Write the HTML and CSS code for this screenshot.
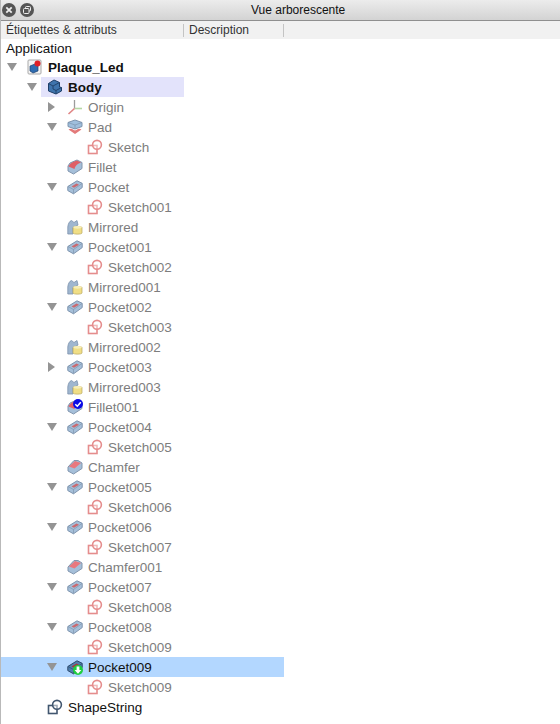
FILE: index.html
```html
<!DOCTYPE html>
<html lang="fr">
<head>
    <meta charset="UTF-8">
    <meta name="viewport" content="width=device-width, initial-scale=1.0">
    <title>Vue arborescente</title>
    <link rel="stylesheet" href="styles.css">
</head>
<body>
    <svg class="defs" width="0" height="0">
        <defs>
            <symbol id="i-sketch" viewBox="0 0 16 16">
                <rect x="1.5" y="6.5" width="8.5" height="8" fill="#fff" fill-opacity=".4" stroke="#e58d8d" stroke-width="1.6"/>
                <circle cx="10" cy="5.8" r="4.4" fill="#fff" fill-opacity=".4" stroke="#e58d8d" stroke-width="1.6"/>
            </symbol>
            <symbol id="i-string" viewBox="0 0 16 16">
                <rect x="1.5" y="6.5" width="8.5" height="8" fill="#fff" stroke="#41566f" stroke-width="1.6"/>
                <circle cx="10" cy="5.8" r="4.4" fill="#fff" fill-opacity=".5" stroke="#41566f" stroke-width="1.6"/>
            </symbol>
            <symbol id="i-part" viewBox="0 0 16 16">
                <rect x="1" y="1" width="13" height="14" rx="1" fill="#f4f4f4" stroke="#a8a8a8"/>
                <path d="M3 7l5-2 3 2v5l-5 2-3-2z" fill="#2f6cb0" stroke="#1d3f6d" stroke-width=".7"/>
                <circle cx="10.5" cy="4.5" r="3" fill="#e01f26"/>
            </symbol>
            <symbol id="i-body" viewBox="0 0 16 16">
                <path d="M1.5 4.500L7 1l5.500 2.500v4.500l2 .5v3.500L9 15 1.500 12z" fill="#3f74ad" stroke="#1f3f68"/>
                <path d="M1.500 4.500L6 7v3l3 1.500V15M6 7l6.500-3.500M9 11.500L14.500 8.500" fill="none" stroke="#1f3f68" stroke-width=".9"/>
            </symbol>
            <symbol id="i-pad" viewBox="0 0 16 16">
                <path d="M1 3.500L8 1l7 2.500v4L8 10 1 7.500z" fill="#9fbfdd" stroke="#7d93ad"/>
                <path d="M1 3.500L8 6l7-2.500M8 6v4" fill="none" stroke="#7d93ad" stroke-width=".7"/>
                <path d="M1.500 10.500C3 9.500 4 9.500 5 10l3 1.500 3-1.500c1-.5 2-.5 3.500.5L8 15z" fill="#e37a7a"/>
            </symbol>
            <symbol id="i-fillet" viewBox="0 0 16 16">
                <path d="M1 7l2-3 7-3 5 2.500v6L6.500 15 1 12z" fill="#a5bfd9" stroke="#8296ae"/>
                <path d="M1.500 7.500C2.500 4.500 6 2.500 10 1.500l4 2c-3 1-5.500 2.500-6.500 6.500z" fill="#e05f66"/>
            </symbol>
            <symbol id="i-chamfer" viewBox="0 0 16 16">
                <path d="M1 8l6-6.500h4l4 2.500v5.500L6.500 15 1 12z" fill="#a5bfd9" stroke="#8296ae"/>
                <path d="M2 7.500L8 2l6 2-6.500 5.500z" fill="#e9787e"/>
            </symbol>
            <symbol id="i-pocket" viewBox="0 0 16 16">
                <path d="M.8 7.500L10 1.800l5.200 2.500v4.300L6.500 14.800.8 11.600z" fill="#a5bfd9" stroke="#7d93ad" stroke-linejoin="round"/>
                <path d="M1 7.500l5.500 3L15 4.500M6.500 10.500v4" fill="none" stroke="#7d93ad" stroke-width=".7"/>
                <path d="M4.500 7.500l5-3 2.500 1.200-5 3z" fill="#c9696f"/>
            </symbol>
            <symbol id="i-pocket-on" viewBox="0 0 16 16">
                <path d="M.8 7.500L10 1.800l5.200 2.500v4.300L6.500 14.800.8 11.600z" fill="#4f7fae" stroke="#2d4a6d" stroke-linejoin="round"/>
                <path d="M1 7.500l5.500 3L15 4.500M6.500 10.500v4" fill="none" stroke="#2d4a6d" stroke-width=".7"/>
                <path d="M4.500 7.500l5-3 2.500 1.200-5 3z" fill="#a33a40"/>
            </symbol>
            <symbol id="i-mirror" viewBox="0 0 16 16">
                <path d="M.8 15V8C1 5 2.500 2 4.500 1.500L7 3.500l3-2 1 4.500-5 3v6z" fill="#9fb6cf" stroke="#7d93ad" stroke-width=".8"/>
                <path d="M6 8.500c0-1.500 9-1.500 9 0V14c0 1.500-9 1.500-9 0z" fill="#f0de85" stroke="#b8a860" stroke-width=".7"/>
                <ellipse cx="10.500" cy="8.300" rx="4.200" ry="1.400" fill="#f7eeb7"/>
            </symbol>
            <symbol id="i-origin" viewBox="0 0 16 16">
                <path d="M7.500 1v8.500" stroke="#9c9c9c" stroke-width="1.300"/>
                <path d="M7.500 9.500h7.500" stroke="#b5d8a5" stroke-width="1.600"/>
                <path d="M7.500 9.500L1.500 15" stroke="#e08484" stroke-width="1.600"/>
            </symbol>
            <symbol id="b-check" viewBox="0 0 10 10">
                <circle cx="5" cy="5" r="5" fill="#0a0ae6"/>
                <path d="M2.300 5.200l2 2 3.500-4" fill="none" stroke="#fff" stroke-width="1.500"/>
            </symbol>
            <symbol id="b-down" viewBox="0 0 10 10">
                <circle cx="5" cy="5" r="5" fill="#1fcf3f"/>
                <path d="M3.600 1.500h2.800v3.500h2L5 8.800 1.600 5h2z" fill="#fff"/>
            </symbol>
        </defs>
    </svg>

    <div class="titlebar">
        <div class="win-btns">
            <span class="win-btn">
                <svg width="14" height="14" viewBox="0 0 14 14"><path d="M4.300 4.300l5.400 5.400M9.700 4.300l-5.400 5.400" stroke="#eee" stroke-width="1.800"/></svg>
            </span>
            <span class="win-btn">
                <svg width="14" height="14" viewBox="0 0 14 14"><rect x="5.500" y="3.500" width="5" height="4.500" rx="1" fill="none" stroke="#eee"/><rect x="3.500" y="5.500" width="5.500" height="5" rx="1" fill="#555" stroke="#eee"/></svg>
            </span>
        </div>
        <div class="title">Vue arborescente</div>
    </div>

    <div class="columns">
        <div class="col col-label">Étiquettes &amp; attributs</div>
        <div class="col col-desc">Description</div>
    </div>

    <div class="tree">
        <div class="row root">Application</div>

        <div class="row lv0 strong"><i class="arrow open"></i><svg class="ico"><use href="#i-part"/></svg>Plaque_Led</div>
        <div class="row lv1 strong"><i class="arrow open"></i><span class="active-body"><svg class="ico"><use href="#i-body"/></svg>Body</span></div>

        <div class="row lv2 off"><i class="arrow closed"></i><svg class="ico"><use href="#i-origin"/></svg>Origin</div>
        <div class="row lv2 off"><i class="arrow open"></i><svg class="ico"><use href="#i-pad"/></svg>Pad</div>
        <div class="row lv3 off"><svg class="ico"><use href="#i-sketch"/></svg>Sketch</div>
        <div class="row lv2 off"><i class="arrow"></i><svg class="ico"><use href="#i-fillet"/></svg>Fillet</div>
        <div class="row lv2 off"><i class="arrow open"></i><svg class="ico"><use href="#i-pocket"/></svg>Pocket</div>
        <div class="row lv3 off"><svg class="ico"><use href="#i-sketch"/></svg>Sketch001</div>
        <div class="row lv2 off"><i class="arrow"></i><svg class="ico"><use href="#i-mirror"/></svg>Mirrored</div>
        <div class="row lv2 off"><i class="arrow open"></i><svg class="ico"><use href="#i-pocket"/></svg>Pocket001</div>
        <div class="row lv3 off"><svg class="ico"><use href="#i-sketch"/></svg>Sketch002</div>
        <div class="row lv2 off"><i class="arrow"></i><svg class="ico"><use href="#i-mirror"/></svg>Mirrored001</div>
        <div class="row lv2 off"><i class="arrow open"></i><svg class="ico"><use href="#i-pocket"/></svg>Pocket002</div>
        <div class="row lv3 off"><svg class="ico"><use href="#i-sketch"/></svg>Sketch003</div>
        <div class="row lv2 off"><i class="arrow"></i><svg class="ico"><use href="#i-mirror"/></svg>Mirrored002</div>
        <div class="row lv2 off"><i class="arrow closed"></i><svg class="ico"><use href="#i-pocket"/></svg>Pocket003</div>
        <div class="row lv2 off"><i class="arrow"></i><svg class="ico"><use href="#i-mirror"/></svg>Mirrored003</div>
        <div class="row lv2 off"><i class="arrow"></i><span class="ico-wrap"><svg class="ico"><use href="#i-fillet"/></svg><svg class="badge badge-check"><use href="#b-check"/></svg></span>Fillet001</div>
        <div class="row lv2 off"><i class="arrow open"></i><svg class="ico"><use href="#i-pocket"/></svg>Pocket004</div>
        <div class="row lv3 off"><svg class="ico"><use href="#i-sketch"/></svg>Sketch005</div>
        <div class="row lv2 off"><i class="arrow"></i><svg class="ico"><use href="#i-chamfer"/></svg>Chamfer</div>
        <div class="row lv2 off"><i class="arrow open"></i><svg class="ico"><use href="#i-pocket"/></svg>Pocket005</div>
        <div class="row lv3 off"><svg class="ico"><use href="#i-sketch"/></svg>Sketch006</div>
        <div class="row lv2 off"><i class="arrow open"></i><svg class="ico"><use href="#i-pocket"/></svg>Pocket006</div>
        <div class="row lv3 off"><svg class="ico"><use href="#i-sketch"/></svg>Sketch007</div>
        <div class="row lv2 off"><i class="arrow"></i><svg class="ico"><use href="#i-chamfer"/></svg>Chamfer001</div>
        <div class="row lv2 off"><i class="arrow open"></i><svg class="ico"><use href="#i-pocket"/></svg>Pocket007</div>
        <div class="row lv3 off"><svg class="ico"><use href="#i-sketch"/></svg>Sketch008</div>
        <div class="row lv2 off"><i class="arrow open"></i><svg class="ico"><use href="#i-pocket"/></svg>Pocket008</div>
        <div class="row lv3 off"><svg class="ico"><use href="#i-sketch"/></svg>Sketch009</div>
        <div class="row lv2 selected"><i class="arrow open"></i><span class="ico-wrap"><svg class="ico"><use href="#i-pocket-on"/></svg><svg class="badge badge-down"><use href="#b-down"/></svg></span>Pocket009</div>
        <div class="row lv3 off"><svg class="ico"><use href="#i-sketch"/></svg>Sketch009</div>
        <div class="row lv1"><i class="arrow"></i><span class="plain-body"><svg class="ico"><use href="#i-string"/></svg>ShapeString</span></div>
    </div>
</body>
</html>
```

FILE: styles.css
```css
body {
    margin: 0;
    height: 724px;
    overflow: hidden;
    background-color: white;
    color: #111;
    font-family: "Liberation Sans", Arial, sans-serif;
    font-size: 13.5px;
    border-left: 1px solid #b9b9b9;
}
.defs {
    display: block;
    height: 0;
}
.titlebar {
    display: flex;
    align-items: center;
    height: 20px;
    margin-left: -1px;
    background: linear-gradient(#ececec, #d3d3d3);
    border-bottom: 1px solid #8f8f8f;
}
.win-btns {
    display: flex;
    gap: 4px;
    padding-left: 2px;
    width: 242px;
}
.win-btn {
    display: flex;
    width: 14px;
    height: 14px;
    border-radius: 50%;
    background-color: #555;
}
.title {
    padding-left: 7px;
    font-size: 12px;
}
.columns {
    display: flex;
    height: 18px;
    align-items: center;
    background-color: #f1f1f1;
    color: #333;
    font-size: 12px;
}
.col {
    height: 13px;
    line-height: 13px;
    border-right: 1px solid #c4c4c4;
}
.col-label {
    width: 177px;
    padding-left: 5px;
}
.col-desc {
    width: 94px;
    padding-left: 5px;
}
.tree {
    display: flex;
    flex-direction: column;
}
.row {
    display: flex;
    align-items: center;
    height: 20px;
    flex: none;
    white-space: nowrap;
}
.root {
    height: 18px;
    padding-left: 5px;
}
.lv0 {
    padding-left: 6px;
}
.lv1 {
    padding-left: 26px;
}
.lv2 {
    padding-left: 46px;
}
.lv3 {
    padding-left: 86px;
}
.strong {
    font-weight: bold;
}
.off {
    color: #7d7d7d;
}
.selected {
    width: 237px;
    background-color: #b3d7ff;
}
.arrow {
    flex: none;
    display: block;
    width: 14px;
    height: 10px;
    margin-right: 6px;
}
.arrow.open {
    width: 0;
    height: 0;
    margin-right: 10px;
    border-left: 5px solid transparent;
    border-right: 5px solid transparent;
    border-top: 8px solid #949494;
}
.arrow.closed {
    width: 0;
    height: 0;
    margin-left: 1px;
    margin-right: 12px;
    border-top: 5px solid transparent;
    border-bottom: 5px solid transparent;
    border-left: 7px solid #949494;
}
.lv1 .arrow {
    margin-right: 4px;
}
.lv1 .arrow:not(.open) {
    margin-right: 0;
}
.ico {
    flex: none;
    width: 16px;
    height: 16px;
    margin-right: 5px;
}
.ico-wrap {
    position: relative;
    display: flex;
    flex: none;
}
.badge {
    position: absolute;
    width: 10px;
    height: 10px;
}
.badge-check {
    top: 0;
    left: 6px;
}
.badge-down {
    top: 6px;
    left: 6px;
}
.active-body {
    display: flex;
    align-items: center;
    width: 137px;
    height: 20px;
    padding-left: 6px;
    background-color: #e3e3fb;
}
.plain-body {
    display: flex;
    align-items: center;
    padding-left: 6px;
}
```
